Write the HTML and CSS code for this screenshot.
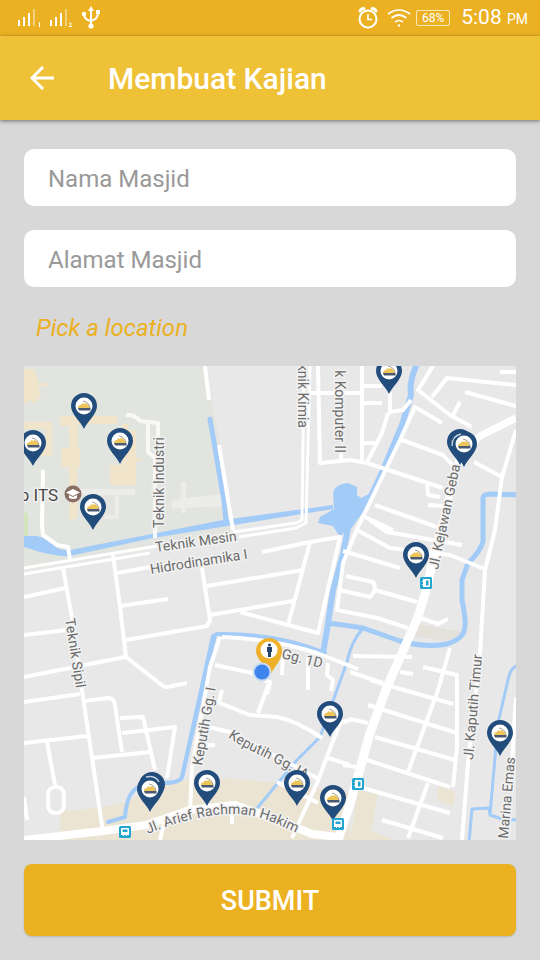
FILE: index.html
```html
<!DOCTYPE html>
<html lang="id">
<head>
<meta charset="utf-8">
<meta name="viewport" content="width=device-width, initial-scale=1">
<title>Membuat Kajian</title>
<link rel="stylesheet" href="styles.css">
</head>
<body>
<div class="status">
  <div class="status-group">
    <svg class="signals" viewBox="0 0 84 24" width="84" height="24" aria-hidden="true">
      <g fill="#fff">
        <path d="M0 14h2v6h-2zM5 11h2v9h-2zM10 7h2v13h-2zM32 14h2v6h-2zM37 11h2v9h-2zM42 7h2v13h-2z"/>
        <path opacity=".4" d="M15 3h2v17h-2zM47 3h2v17h-2z"/>
        <path d="M20 17l2-1v5h-1v-4h-1z"/>
        <path fill="none" stroke="#fff" d="M51 17.500q2-1.500 2.500 0q0 1-2.500 3h3"/>
        <path d="M73 0l3 5h-6z"/>
        <circle cx="73" cy="20" r="2.600"/><circle cx="66" cy="8" r="2.200"/>
        <rect x="78" y="4" width="4" height="4"/>
      </g>
      <path fill="none" stroke="#fff" stroke-width="2" d="M73 3v17M66 8q0 6 7 7M80 7q0 6-7 8"/>
    </svg>
  </div>
  <div class="status-group">
    <svg viewBox="0 0 22 24" width="22" height="24" fill="none" stroke="#fff" aria-hidden="true">
      <circle cx="11" cy="13" r="8.500" stroke-width="2"/>
      <path stroke-width="1.600" d="M11 8v5.500h4"/>
      <path stroke-width="3" stroke-linecap="round" d="M3 5q1-2.500 4-2.500M19 5q-1-2.500-4-2.500"/>
    </svg>
    <svg class="wifi" viewBox="0 0 24 20" width="24" height="20" fill="none" stroke="#fff" stroke-width="1.700" aria-hidden="true">
      <path d="M1 6q11-8 22 0M4.500 10q7.500-6 15 0M8 14q4-3 8 0"/>
      <circle cx="12" cy="17.500" r="1.200" fill="#fff" stroke="none"/>
    </svg>
    <span class="battery">68%</span>
    <span class="clock">5:08 <small>PM</small></span>
  </div>
</div>
<header class="bar">
  <button class="back" type="button" aria-label="Kembali">
    <svg viewBox="0 0 24 24" width="24" height="24" fill="none" stroke="#fff" stroke-width="3" aria-hidden="true"><path d="M24 12H2M13 1L2 12l11 11"/></svg>
  </button>
  <h1>Membuat Kajian</h1>
</header>
<form class="form">
  <input type="text" placeholder="Nama Masjid" aria-label="Nama Masjid">
  <input type="text" placeholder="Alamat Masjid" aria-label="Alamat Masjid">
  <p class="pick">Pick a location</p>
  <svg class="map" viewBox="24 366 492 474" role="img" aria-label="Map">
    <defs>
      <g id="pin">
        <path fill="#214c7c" d="M0 0C-3-7-13-15-13-23a13 13 0 0 1 26 0C13-15 3-7 0 0z"/>
        <circle cy="-23" r="8.500" fill="#fff"/>
        <path fill="#edc558" d="M-6-21q0-3 3-3q1-3 3-1q2-2 3 0q2 1 3 4z"/>
        <path fill="none" stroke="#8b8c7c" stroke-width=".8" d="M-1-28q6 1 7 7"/>
        <path fill="#4a5a74" d="M-6-21H6.500v2.500H-5z"/>
      </g>
      <g id="bus">
        <rect x="-6" y="-6" width="12" height="12" rx="1.500" fill="#20a6d0"/>
        <path fill="#fff" d="M-4-3q0-1 1-1h6q1 0 1 1v6h-2v1h-1v-1h-2v1h-1v-1h-2z"/>
        <path fill="#20a6d0" d="M-2.500-2.500h5v2.500h-5z"/>
      </g>
      <path id="arief" d="M148 834Q168 825 190 820Q213 814 233 814Q252 814 270 821L306 837"/>
      <path id="gang" d="M228 737Q242 747 260 755Q280 765 312 783"/>
    </defs>
    <rect x="24" y="366" width="492" height="474" fill="#e8e8e8"/>
    <path fill="#e2e4df" d="M24 366H205L220 446L233 530L157 547L24 570z"/>
    <path fill="#d4e5bd" d="M24 512l4 2v22h-4z"/>
    <g fill="#f0e5cb">
      <path d="M24 369h10l4 10v4h10v3h-10l3 10-7 8-4-4-6 5z"/>
      <path d="M24 422h28v34h-15v-10h9v-17h-22z"/>
      <path d="M60 416h57v8h-39v24h2v19h-3v52h-8v-52h-8v-19h8v-22h-9z"/>
      <path d="M122 424h6v6h8v28h6v3h-6v24h-26v-20h12z"/>
    </g>
    <g fill="#ecece9"><path d="M80 489h55v6h-16v24h-15v-4h11v-20h-35zM172 501l9-2v-17h5v16l38-4v12l-38 2v5h-5v-5l-9 1z"/></g>
    <g fill="#ece4d3">
      <path d="M60 812l50-6 20-6 33-16q30-6 67-5t120 14v47H60z"/>
      <path d="M358 790l20 5-7 35 22 10h-43zM438 786l18 6-3 14-16-5z"/>
    </g>
    <path fill="#e3e1da" d="M418 624l44 8q-5 6-17 9l-35-6z"/>

    <g fill="none" stroke="#a3cbf8" stroke-linejoin="round" stroke-linecap="round">
      <path stroke-width="5" d="M210 419l14 82 2 20"/>
      <path stroke-width="6" d="M417 364q-8 17-6 31l-9 30-18 43-12 26-24 34-5 26-10 36-6 40-4 23"/>
      <path stroke-width="5" d="M328 623q16 2 35 5l37 13q26 7 47 3 15-5 17-13 3-7-2-31l0-20 6-17q13-12 15-22v-42q-1-5 8-5l30 1"/>
      <path stroke-width="4" d="M182 777l33-142M217 634q60-1 108 19"/>
      <path stroke-width="4" d="M213 636l-31 141q-2 6-19 6-17 2-26 5-10 5-12 29l-17 5"/>
      <path stroke-width="3" d="M363 628q-12 14-16 34l-27 75-23 23-39 47"/>
      <path stroke-width="3" d="M518 665q-8 3-10 15l-10 43-8 92M469 842l3-33 17-1 1 7 12 4 16 1"/>
    </g>
    <g fill="#a3cbf8">
      <path d="M24 536h13q11 2 20 12 7 3 13 2l153-30 110-15v4l-93 15-87 14-83 18q-10 1-30-4l-16-5z"/>
      <path d="M333 493q2-9 15-10l9 4v8l4 3 10-5-9 20-22 24-7-11-15-3 2-6 14-8z"/>
    </g>

    <g fill="none" stroke="#fff" stroke-width="3" stroke-linejoin="round">
      <path d="M24 568l133-22M24 574l126-21M304 366l-2 154-6 3-63 9M310 366l-4 157-10 5-57 9"/>
    </g>
    <g fill="none" stroke="#fff" stroke-width="4" stroke-linejoin="round">
      <path d="M43 470l-1 55 1 10 14 10 11 2 2 12M63 568l9 50 10 72 21 142"/>
      <path d="M24 597l41-9M24 635l43-5M24 677l101-20M113 555l7 52 6 50 37 29q4 2 9 0l15-3M117 573l33-6M120 606l48-7M126 640l81-14 3-6-8-52"/>
      <path d="M207 586l96-16M210 615l83-14M262 552l48-10 30-5-22 96-30-8-48-13M310 542l-22 83M205 366l4 34M219 445l14 85"/>
      <path d="M126 415q8-1 14 6l18 2v32l4 5M148 423v29l7 6v80" stroke="#f8f8f6"/>
      <path d="M318 366l2 97 30-3 17 3 76 25M310 393h52M341 453v8"/>
      <path d="M362 366v94M362 386h20M362 403h20M362 443h13M390 392v20l13-2 8-10M388 413l-6 20-15 29M433 366l-15 24 32 25 22 12M432 397l15-19 69 7M465 392l51 14M453 415l7-13M500 372h16"/>
      <path d="M442 423l-27-16-15 33-42 87-15 36-6 47 40 8 31 10M402 440l41 15 12 13M516 430l-14 47-7 53-10 40-5 83-12 110-6 77M474 462l28 15M427 485l1 10 12 2M428 505l17 1M375 505l62 22M365 517l28 13"/>
      <path d="M357 530l33 18 60 7 37 15M343 551l57 17M370 520l17 12 75 13M346 576l27 6q5 7-3 15l-30-7M375 590l42 12M418 617l20 7 10-5M353 656l59 1M350 672l33 11M400 672l13 2M423 667l34 8v72l-4 40M450 648l-12 42-30 82"/>
      <path d="M370 680l20 6 63 18M368 705l89 28M375 737l80 23M367 760l83 27M363 788l87 25M382 820l61 18M428 783l-20 55M350 719l18 4M516 697l-4 66M343 765l13 2"/>
      <path d="M220 637l-10 30-18 100-2 46M222 637q50 2 95 16l41 16M215 665l37 8 18 10-3 11M283 653l-1 22M308 657v33M328 663l-1 12 6 5-2 11M270 680l-12 33M212 700l38 15 27 2q20 4 45 21M222 690l-3 12M208 727l22 5 87 46M205 745h10M350 720l-10 3-23 60-25 55M328 758l22 7M277 782l41 21M232 814v10"/>
      <path d="M24 702l56-8M85 701l23-3q6 0 7 7l7 47M24 743l63-7M92 758l58-6M120 718l23-1 12 53M122 733l53-6-8 51M47 742l8 43M24 797l3 23M165 820l-5 20"/>
      <rect x="48" y="787" width="16" height="26" rx="7"/>
      <path stroke-width="7" d="M516 418l-36 18-20 20-8 30-16 60"/>
      <path stroke-width="9" d="M436 546l-9 41-9 30-31 70-17 46-20 71-12 36"/>
      <path stroke-width="8" d="M24 840l79-9 43-6 44-15 45-5 45 16 32 13 26 3"/>
    </g>

    <g class="street">
      <text transform="translate(164 528) rotate(-90)">Teknik Industri</text>
      <text transform="translate(156 552) rotate(-8)">Teknik Mesin</text>
      <text transform="translate(151 574) rotate(-9)">Hidrodinamika I</text>
      <text transform="translate(65 619) rotate(81)">Teknik Sipil</text>
      <text transform="translate(298 428) rotate(90)" text-anchor="end">knik Kimia</text>
      <text transform="translate(335 453) rotate(90)" text-anchor="end">k Komputer II</text>
      <text transform="translate(438 570) rotate(-78)">Jl. Kejawan Geba</text>
      <text transform="translate(202 766) rotate(-80)">Keputih Gg. I</text>
      <text transform="translate(281 658) rotate(14)">Gg. 1D</text>
      <text transform="translate(473 760) rotate(-85)">Jl. Kaputih Timur</text>
      <text transform="translate(508 839) rotate(-85)">Marina Emas</text>
      <text><textPath href="#gang">Keputih Gg. IA</textPath></text>
      <text><textPath href="#arief">Jl. Arief Rachman Hakim</textPath></text>
    </g>
    <text class="place" x="58" y="501" text-anchor="end">p ITS</text>
    <circle cx="73" cy="494" r="8.500" fill="#8a6f66"/>
    <path fill="#fff" d="M73 489l7 3.500-7 3.500-7-3.500zM69 495l4 2 4-2v3q-4 2-8 0z"/>

    <use href="#bus" transform="translate(426 583) rotate(90)"/>
    <use href="#bus" transform="translate(358 784) rotate(90)"/>
    <use href="#bus" x="125" y="832"/>
    <use href="#pin" x="84" y="429"/><use href="#pin" x="33" y="466"/>
    <use href="#pin" x="120" y="464"/><use href="#pin" x="93" y="530"/>
    <use href="#pin" x="389" y="394"/><use href="#pin" x="460" y="465"/>
    <use href="#pin" x="464" y="467"/><use href="#pin" x="416" y="578"/>
    <use href="#pin" x="330" y="737"/><use href="#pin" x="500" y="756"/>
    <use href="#pin" x="207" y="806"/><use href="#pin" x="297" y="806"/>
    <use href="#pin" x="333" y="821"/>
    <use href="#pin" x="152" y="808"/><use href="#pin" x="150" y="812"/>
    <path fill="none" stroke="#c3d0de" stroke-width="1.500" d="M452 446q0-10 9-12M146 777q9-2 13 5"/>
    <use href="#bus" x="338" y="824"/>
    <path fill="#efb02a" d="M271 674C268 667 256 660 256 651a13 13 0 0 1 26 0C282 660 274 667 271 674z"/>
    <circle cx="269" cy="650" r="8.500" fill="#fff"/>
    <path fill="#26456e" d="M267 647h5v5h-1v5h-3v-5h-1z"/><circle cx="269.500" cy="645" r="1.600" fill="#26456e"/>
    <circle cx="262" cy="672" r="9.500" fill="#c9dcf5"/>
    <circle cx="262" cy="672" r="7.500" fill="#3f83ec"/>
  </svg>
  <button class="submit" type="button">SUBMIT</button>
</form>
</body>
</html>
```
FILE: styles.css
```css
* { box-sizing: border-box; }
body {
  margin: 0;
  min-height: 100vh;
  background: #d8d8d8;
  font-family: Roboto, "Liberation Sans", sans-serif;
}
.status {
  display: flex;
  justify-content: space-between;
  align-items: center;
  height: 36px;
  padding: 0 12px 0 18px;
  background: #ebb122;
  color: #fff;
}
.status-group { display: flex; align-items: center; }
.status svg { display: block; }
.wifi { margin: 0 5px 0 8px; }
.battery {
  width: 34px;
  height: 16px;
  margin-right: 11px;
  border: 1px solid #fbe9b8;
  border-radius: 2px;
  font-size: 12px;
  line-height: 15px;
  text-align: center;
}
.clock { font-size: 21px; line-height: 38px; }
.clock small { font-size: 14px; }
.bar {
  position: relative;
  display: flex;
  align-items: center;
  height: 84px;
  padding-left: 18px;
  background: #efc137;
  box-shadow: 0 1px 4px rgba(0, 0, 0, .5);
}
.back {
  display: grid;
  place-items: center;
  width: 48px;
  height: 48px;
  padding: 0;
  border: 0;
  background: none;
}
.bar h1 {
  margin: 0 0 0 42px;
  color: #fff;
  font-size: 30px;
  font-weight: 500;
}
.form {
  display: flex;
  flex-direction: column;
  padding: 29px 24px 24px;
}
.form input {
  width: 100%;
  height: 57px;
  margin-bottom: 24px;
  padding: 2px 24px 0;
  border: 0;
  border-radius: 10px;
  background: #fff;
  color: #333;
  font: 24px Roboto, "Liberation Sans", sans-serif;
}
.form input::placeholder { color: #999; opacity: 1; }
.pick {
  margin: 0 12px 21px;
  color: #ebb122;
  font-size: 24px;
  font-style: italic;
  line-height: 34px;
}
.map { display: block; width: 100%; }
.street { fill: #6b6b6b; font-size: 14px; }
.street text, .place {
  paint-order: stroke;
  stroke: #f2f2f2;
  stroke-width: 3px;
  stroke-linejoin: round;
}
.place { fill: #484848; font-size: 17px; }
.submit {
  height: 72px;
  margin-top: 24px;
  padding: 2px 0 0;
  border: 0;
  border-radius: 8px;
  background: #ecb120;
  box-shadow: 0 1px 2px rgba(0, 0, 0, .15);
  color: #fff;
  font: 500 27px Roboto, "Liberation Sans", sans-serif;
}
```
